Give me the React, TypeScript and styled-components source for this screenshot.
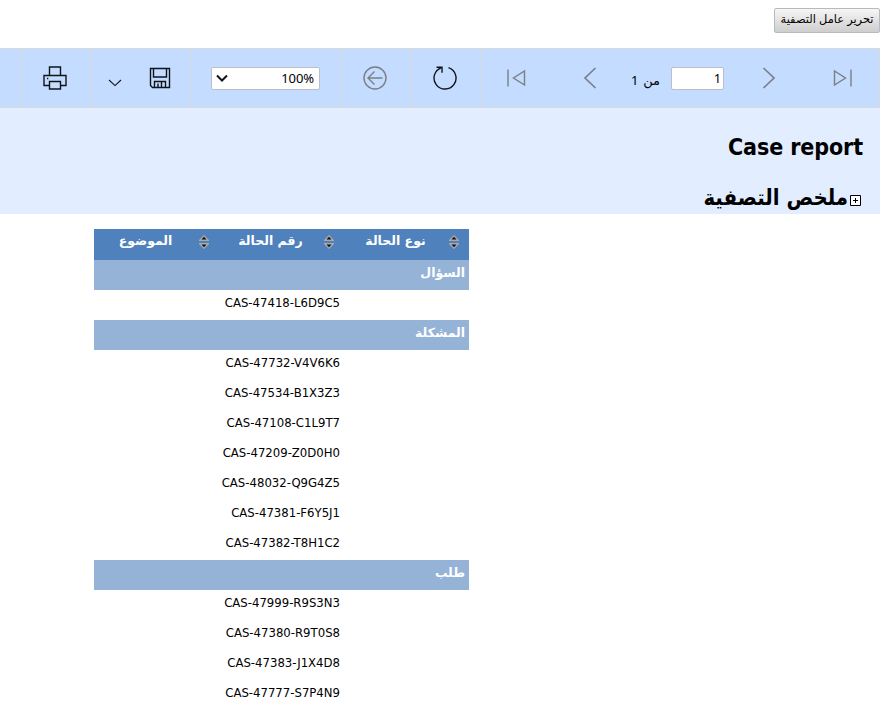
import React from 'react';
import styled, { createGlobalStyle } from 'styled-components';

const Global = createGlobalStyle`
  * { box-sizing: border-box; }
  body { margin: 0; background: #fff; overflow: hidden; }
`;

const UI = '"Noto Sans", "DejaVu Sans", sans-serif';
const REPORT = '"DejaVu Sans Condensed", "DejaVu Sans", sans-serif';

const Page = styled.div`
  width: 880px;
  height: 721px;
  display: flex;
  flex-direction: column;
  color: #000;
  font-family: ${REPORT};
`;

const TopBar = styled.header`
  height: 48px;
  flex: none;
  display: flex;
  justify-content: flex-end;
  align-items: flex-start;
  padding-top: 8px;
`;

const EditButton = styled.button`
  width: 106px;
  height: 25px;
  padding: 0 0 3px;
  border: 1px solid #b5bbc1;
  border-radius: 2px;
  background: linear-gradient(#f6f6f6, #cecece);
  color: #000;
  font: 11.4px/18px "Liberation Sans", "DejaVu Sans", sans-serif;
  white-space: nowrap;
`;

const Toolbar = styled.nav`
  height: 60px;
  flex: none;
  display: grid;
  grid-template-columns: 21px 70px 100px 150px 70px 70px 1fr;
  background: #c4dcff;
  border: solid #dadada;
  border-width: 1px 1px 1px 0;
`;

const Group = styled.div<{ $pad?: number }>`
  display: flex;
  align-items: center;
  justify-content: ${p => (p.$pad === undefined ? 'center' : 'flex-start')};
  padding-left: ${p => p.$pad ?? 0}px;
  padding-right: ${p => (p.$pad === undefined ? 2 : 0)}px;
  border-right: 1px solid #dadada;
  &:last-child { border-right: 0; }
`;

const Icon = styled.svg<{ $gap?: number; $gray?: boolean; $drop?: number }>`
  display: block;
  flex: none;
  margin-left: ${p => p.$gap ?? 0}px;
  margin-top: ${p => p.$drop ?? 0}px;
  fill: none;
  stroke: ${p => (p.$gray ? '#7b7f86' : '#101418')};
  stroke-width: 1.4;
`;

const Field = styled.div<{ $width: number; $gap?: number; $end?: number }>`
  width: ${p => p.$width}px;
  height: 23px;
  margin-left: ${p => p.$gap ?? 0}px;
  padding: 0 ${p => p.$end ?? 5}px 0 4px;
  display: flex;
  align-items: center;
  justify-content: flex-end;
  background: #fff;
  border: 1px solid #bcbfc4;
  border-radius: 2px;
  font: 13px/20px ${UI};
  letter-spacing: -0.1px;
  svg { margin-right: auto; margin-left: 0; }
`;

const PageCount = styled.span`
  width: 29px;
  margin: 3px 0 0 34px;
  display: flex;
  justify-content: space-between;
  font: 13px/20px ${UI};
`;

const Heading = styled.section`
  height: 106px;
  flex: none;
  padding: 22px 17px 0 0;
  background: #e2eeff;
  direction: rtl;
`;

const Title = styled.h1`
  margin: 0;
  font: bold 23px/34px "DejaVu Sans Condensed", "DejaVu Sans", sans-serif;
  letter-spacing: -0.1px;
  white-space: nowrap;
`;

const Summary = styled.h2`
  margin: 18px 2px 0 0;
  display: flex;
  align-items: center;
  font: bold 22px/32px ${REPORT};
  white-space: nowrap;
  svg { margin: 4px 0 0 2px; }
`;

const Report = styled.main`
  width: 375px;
  margin: 15px 0 0 94px;
  direction: rtl;
  font-size: 12.5px;
  font-family: "DejaVu Sans", sans-serif;
`;

const Columns = styled.div`
  height: 31px;
  display: grid;
  grid-template-columns: repeat(3, 125px);
  background: #4f81bd;
`;

const ColumnHead = styled.div`
  display: flex;
  padding-right: 9px;
  color: #fff;
  font-weight: bold;
  line-height: 23px;
  svg { flex: none; margin-top: 6px; }
  span { flex: 1; text-align: center; margin-right: 1px; }
`;

const GroupRow = styled.div`
  height: 30px;
  padding-right: 4px;
  background: #95b3d7;
  color: #fff;
  font-weight: bold;
  line-height: 25px;
`;

const CaseRow = styled.div`
  height: 30px;
  padding-right: 129px;
  font: 13px/26px ${REPORT};
`;

const SortIcon = () => (
  <svg width="12" height="14" viewBox="0 0 12 14">
    <path d="M6 0 11 5v1H1V5zM6 14 11 9V8H1v1z" fill="#a9a9a9" />
    <path d="M6 1.800 8.500 4.500h-5zM6 12.200 8.500 9.500h-5z" fill="#111" />
  </svg>
);

const sections = [
  { name: 'السؤال', cases: ['CAS-47418-L6D9C5'] },
  {
    name: 'المشكلة',
    cases: ['CAS-47732-V4V6K6', 'CAS-47534-B1X3Z3', 'CAS-47108-C1L9T7', 'CAS-47209-Z0D0H0',
      'CAS-48032-Q9G4Z5', 'CAS-47381-F6Y5J1', 'CAS-47382-T8H1C2'],
  },
  { name: 'طلب', cases: ['CAS-47999-R9S3N3', 'CAS-47380-R9T0S8', 'CAS-47383-J1X4D8', 'CAS-47777-S7P4N9'] },
];

export default function App() {
  return (
    <Page>
      <Global />
      <TopBar><EditButton dir="rtl">تحرير عامل التصفية</EditButton></TopBar>
      <Toolbar>
        <Group />
        <Group>
          <Icon width="24" height="24" viewBox="0 0 24 24">
            <path d="M6.500 9V1H17.500v8M6.500 19.500H1V9.500h22v10h-5.500M6.500 15.500h11v7.500h-11z" />
            <path d="M4 12.500h1.300" />
          </Icon>
        </Group>
        <Group $pad={17}>
          <Icon width="14" height="8" viewBox="0 0 14 8" $drop={10}><path d="m1 1 6 5.600L13 1" strokeWidth="1.100" /></Icon>
          <Icon width="22" height="22" viewBox="0 0 22 22" $gap={27}>
            <path d="M1.500 1.500h19v19H3.500l-2-2zM4.500 1.500V10h13V1.500M5.500 20.500v-6h11v6M9 20v-3.500M12.500 15v5.500" />
          </Icon>
        </Group>
        <Group $pad={20}>
          <Field $width={109}>
            <Icon width="12" height="8" viewBox="0 0 12 8"><path d="m1 1.500 5 5 5-5" strokeWidth="2" /></Icon>
            <span>100%</span>
          </Field>
        </Group>
        <Group>
          <Icon width="24" height="24" viewBox="0 0 24 24" $gray>
            <circle cx="12" cy="12" r="11" /><path d="M19.500 12H5.500M11.500 5.500 5 12l6.500 6.500" />
          </Icon>
        </Group>
        <Group>
          <Icon width="24" height="24" viewBox="0 0 24 24">
            <path d="M15.500 1.600a11 11 0 1 1-7.500.2" /><path d="M3.500 1.200H9v5.600" />
          </Icon>
        </Group>
        <Group $pad={25}>
          <Icon width="20" height="18" viewBox="0 0 20 18" $gray>
            <path d="M2 .5v17M18.500 2v14L7.500 9z" />
          </Icon>
          <Icon width="14" height="22" viewBox="0 0 14 22" $gap={57} $gray><path d="M12.500 1 2 11l10.500 10" strokeWidth="1.700" /></Icon>
          <PageCount><span>1</span><span dir="rtl">من</span></PageCount>
          <Field $width={53} $gap={11} $end={2}>1</Field>
          <Icon width="14" height="22" viewBox="0 0 14 22" $gap={38} $gray><path d="m1.500 1 10.500 10L1.500 21" strokeWidth="1.700" /></Icon>
          <Icon width="20" height="18" viewBox="0 0 20 18" $gap={57} $gray>
            <path d="M18 .5v17M1.500 2v14l11-7z" />
          </Icon>
        </Group>
      </Toolbar>
      <Heading>
        <Title><bdi>Case report</bdi></Title>
        <Summary>
          <svg width="11" height="11" viewBox="0 0 11 11">
            <path d="M.5.5h10v10H.5z" fill="#fff" stroke="#000" />
            <path d="M3 5.500h5M5.500 3v5" stroke="#000" />
          </svg>
          <span>ملخص التصفية</span>
        </Summary>
      </Heading>
      <Report>
        <Columns>
          {['نوع الحالة', 'رقم الحالة', 'الموضوع'].map(name => (
            <ColumnHead key={name}><SortIcon /><span>{name}</span></ColumnHead>
          ))}
        </Columns>
        {sections.map(section => (
          <React.Fragment key={section.name}>
            <GroupRow>{section.name}</GroupRow>
            {section.cases.map(id => <CaseRow key={id}><bdi>{id}</bdi></CaseRow>)}
          </React.Fragment>
        ))}
      </Report>
    </Page>
  );
}
